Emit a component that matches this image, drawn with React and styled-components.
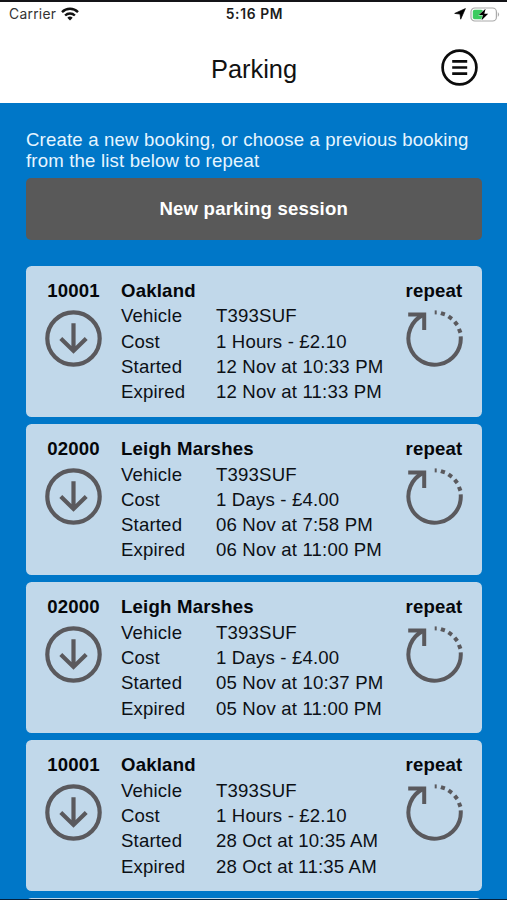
import React from 'react'
import styled, { createGlobalStyle } from 'styled-components'

const GlobalStyle = createGlobalStyle`
  * {
    box-sizing: border-box;
  }
  body {
    margin: 0;
    background: #0077c8;
    overflow: hidden;
  }
`

const Screen = styled.div`
  display: flex;
  flex-direction: column;
  height: 900px;
  overflow: hidden;
  background: #0077c8;
  border-top: 2px solid #141418;
  border-bottom: 1px solid #04203c;
  font-family: "Liberation Sans", Arial, sans-serif;
  color: #0c1016;
`

const Top = styled.header`
  flex: none;
  height: 100.6px;
  background: #fff;
`

const StatusBar = styled.div`
  display: grid;
  grid-template-columns: 1fr auto 1fr;
  align-items: center;
  height: 24px;
  padding: 0 7px 0 9px;
  font-family: Inter, sans-serif;
`

const Carrier = styled.div`
  display: flex;
  align-items: center;
  gap: 5px;
  font-size: 13.8px;
  color: #333;
  letter-spacing: 0.3px;
`

const Clock = styled.div`
  font-size: 13.8px;
  font-weight: 600;
  letter-spacing: 0.65px;
  color: #1c1c1c;
`

const StatusIcons = styled.div`
  display: flex;
  justify-content: flex-end;
  align-items: center;
  gap: 4px;
`

const TitleBar = styled.div`
  display: grid;
  grid-template-columns: 1fr auto 1fr;
  align-items: center;
  height: 83px;
  padding: 0 29px 0 30px;
`

const Title = styled.h1`
  grid-column: 2;
  margin: 0;
  padding-top: 3px;
  font-size: 25.4px;
  font-weight: 400;
  color: #111;
`

const MenuButton = styled.button`
  justify-self: end;
  display: flex;
  padding: 0;
  border: 0;
  background: none;
`

const Content = styled.main`
  padding: 26px 25.5px 0 26px;
`

const Intro = styled.p`
  margin: 0;
  font-size: 18.6px;
  line-height: 21.7px;
  letter-spacing: 0.17px;
  white-space: nowrap;
  color: #e6f5ff;
`

const NewButton = styled.button`
  display: block;
  width: 100%;
  height: 62.5px;
  margin: 5.5px 0 25.5px;
  padding: 0;
  border: 0;
  border-radius: 5px;
  background: #595959;
  color: #fff;
  font-family: inherit;
  font-size: 18.6px;
  font-weight: 700;
  letter-spacing: 0.19px;
`

const List = styled.div`
  display: flex;
  flex-direction: column;
  gap: 6.5px;
`

const Card = styled.article`
  display: grid;
  grid-template-columns: 95px 1fr 95px;
  height: 151.6px;
  padding-top: 12.7px;
  border-radius: 5.5px;
  background: #c1d8ea;
  font-size: 18.6px;
  line-height: 25.3px;
`

const Side = styled.div`
  display: flex;
  flex-direction: column;
  align-items: center;

  svg {
    margin-top: 6.4px;
  }
`

const Bold = styled.div`
  font-weight: 700;
  letter-spacing: ${(props) => props.$spacing || 0.2}px;
  color: #05070a;
`

const Details = styled.div`
  white-space: nowrap;
`

const Row = styled.div`
  display: grid;
  grid-template-columns: 95px 1fr;
  letter-spacing: 0.17px;
`

const WifiIcon = () => (
  <svg width="18" height="14" viewBox="0 0 18 14" fill="none" stroke="#111" strokeWidth="2.4">
    <path d="M1 5.1a11.4 11.4 0 0 1 16 0" />
    <path d="M4.1 8.5a7 7 0 0 1 9.8 0" />
    <path d="M9 13.6 6.3 10.8a3.9 3.9 0 0 1 5.4 0Z" fill="#111" stroke="none" />
  </svg>
)

const LocationIcon = () => (
  <svg width="12" height="12" viewBox="0 0 12 12">
    <path d="M11.4.6 6.7 11.2 6 6.1.7 5.4Z" fill="#000" stroke="#000" strokeWidth=".7" strokeLinejoin="round" />
  </svg>
)

const BatteryIcon = () => (
  <svg width="30" height="15" viewBox="0 0 30 15">
    <rect x="1" y="1" width="25.4" height="13" rx="3.8" fill="#fff" stroke="#aaa" strokeWidth="1.2" />
    <path d="M27.8 5q2.6 2.5 0 5z" fill="#aaa" />
    <rect x="2.8" y="2.8" width="10.2" height="9.4" rx="1.8" fill="#3ccb5f" />
    <path d="M15.6 1.8 8.8 8.1h4.1l-1.3 5.1 6.6-6.4h-3.9z" fill="#000" stroke="#fff" strokeWidth=".8" paintOrder="stroke" />
  </svg>
)

const MenuIcon = () => (
  <svg width="37" height="37" viewBox="0 0 37 37" fill="none" stroke="#0c0c0c">
    <circle cx="18.5" cy="18.5" r="16.9" strokeWidth="2.7" />
    <path d="M11.2 12.4h15M11.2 18.5h15M11.2 24.6h15" strokeWidth="2.6" />
  </svg>
)

const DownIcon = () => (
  <svg width="57" height="57" viewBox="0 0 57 57" fill="none" stroke="#5a595d" strokeWidth="4.2">
    <circle cx="28.5" cy="28.5" r="26.2" />
    <path d="M28.5 13.2v28M15.8 28.6l12.7 12.3 12.7-12.3" />
  </svg>
)

const RepeatIcon = () => (
  <svg width="57" height="57" viewBox="0 0 57 57" fill="none" stroke="#5a595d" strokeWidth="4">
    <path d="M2.2 4.4h16v15.6" />
    <path d="M17.2 4.9A26.2 26.2 0 1 0 54.7 26.4" />
    <g fill="#5a595d" stroke="none">
      <rect x="28.7" y="0.4" width="2" height="4" />
      <rect x="34.8" y="1.8" width="4.2" height="4" transform="rotate(18 36.9 3.8)" />
      <rect x="42.1" y="5.6" width="4.2" height="4" transform="rotate(36 44.2 7.6)" />
      <rect x="47.9" y="11.4" width="4.2" height="4" transform="rotate(52 50 13.4)" />
      <rect x="51.6" y="18.8" width="4.2" height="4" transform="rotate(70 53.7 20.8)" />
    </g>
  </svg>
)

const sessions = [
  { code: '10001', place: 'Oakland', cost: '1 Hours - £2.10', started: '12 Nov at 10:33 PM', expired: '12 Nov at 11:33 PM' },
  { code: '02000', place: 'Leigh Marshes', cost: '1 Days - £4.00', started: '06 Nov at 7:58 PM', expired: '06 Nov at 11:00 PM' },
  { code: '02000', place: 'Leigh Marshes', cost: '1 Days - £4.00', started: '05 Nov at 10:37 PM', expired: '05 Nov at 11:00 PM' },
  { code: '10001', place: 'Oakland', cost: '1 Hours - £2.10', started: '28 Oct at 10:35 AM', expired: '28 Oct at 11:35 AM' },
]

const Session = ({ session }) => (
  <Card>
    <Side>
      <Bold>{session.code}</Bold>
      <DownIcon />
    </Side>
    <Details>
      <Bold>{session.place}</Bold>
      <Row><span>Vehicle</span><span>T393SUF</span></Row>
      <Row><span>Cost</span><span>{session.cost}</span></Row>
      <Row><span>Started</span><span>{session.started}</span></Row>
      <Row><span>Expired</span><span>{session.expired}</span></Row>
    </Details>
    <Side>
      <Bold>repeat</Bold>
      <RepeatIcon />
    </Side>
  </Card>
)

export default function App() {
  return (
    <>
      <GlobalStyle />
      <Screen>
        <Top>
          <StatusBar>
            <Carrier>Carrier <WifiIcon /></Carrier>
            <Clock>5:16 PM</Clock>
            <StatusIcons>
              <LocationIcon />
              <BatteryIcon />
            </StatusIcons>
          </StatusBar>
          <TitleBar>
            <Title>Parking</Title>
            <MenuButton aria-label="Menu"><MenuIcon /></MenuButton>
          </TitleBar>
        </Top>
        <Content>
          <Intro>
            Create a new booking, or choose a previous booking
            <br />
            from the list below to repeat
          </Intro>
          <NewButton>New parking session</NewButton>
          <List>
            {sessions.map((session, i) => (
              <Session key={i} session={session} />
            ))}
            {/* next card, only its top edge is on screen */}
            <Card />
          </List>
        </Content>
      </Screen>
    </>
  )
}
